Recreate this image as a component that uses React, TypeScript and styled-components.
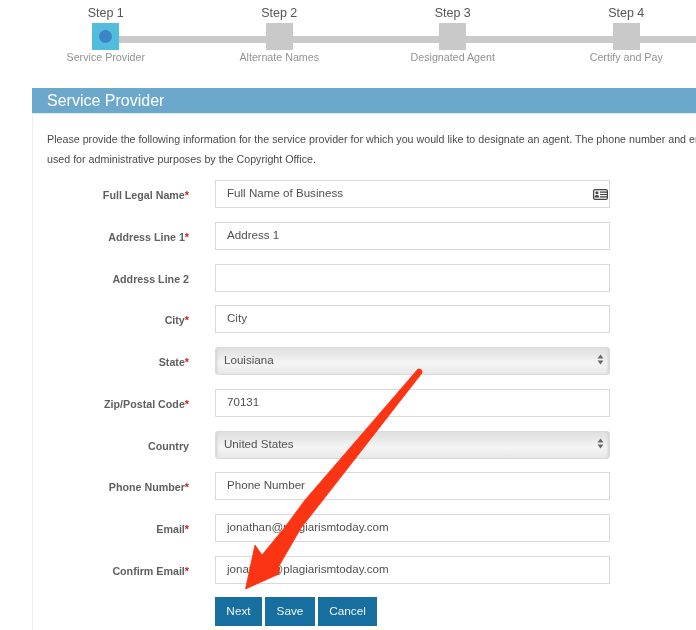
import React from "react";
import styled, { createGlobalStyle } from "styled-components";

const Global = createGlobalStyle`
  html, body { margin: 0; padding: 0; background: #fff; }
  body { font-family: "Liberation Sans", Arial, sans-serif; color: #555; }
`;

const Page = styled.div`
  position: relative;
  width: 696px;
  height: 630px;
  overflow: hidden;
  background: #fff;
  filter: blur(0.35px);
`;

const Stepper = styled.div`
  display: flex;
  padding: 6px 0 0 19px;
  width: 900px;
`;

const Step = styled.div`
  width: 173.5px;
  flex: none;
  display: flex;
  flex-direction: column;
  align-items: center;
  position: relative;
`;

const StepTitle = styled.div`
  font-size: 12.5px;
  line-height: 15px;
  color: #555;
  margin-bottom: 2px;
`;

const Marker = styled.div<{ $active?: boolean }>`
  width: 27px;
  height: 27px;
  background: ${(p) => (p.$active ? "#52bcdc" : "#c9c9c9")};
  display: flex;
  align-items: center;
  justify-content: center;
  position: relative;
  &::after {
    content: "";
    position: absolute;
    left: 27px;
    top: 13px;
    width: 147px;
    height: 7px;
    background: #cacaca;
  }
`;

const Dot = styled.span`
  width: 13px;
  height: 13px;
  border-radius: 50%;
  background: #3d85c6;
`;

const StepCaption = styled.div`
  font-size: 10.7px;
  line-height: 14px;
  color: #929292;
  white-space: nowrap;
`;

const Panel = styled.section`
  margin: 24px 0 0 32px;
  width: 900px;
  border-left: 1px solid #eee;
  height: 600px;
`;

const PanelHeader = styled.h2`
  margin: 0 0 0 -1px;
  height: 25px;
  background: #6ba8cc;
  color: #fff;
  font-size: 16px;
  font-weight: 400;
  line-height: 25px;
  padding-left: 15px;
  border-bottom: 1px solid #dfeaf1;
`;

const Intro = styled.div`
  padding: 15px 0 0 14px;
  font-size: 10.7px;
  line-height: 20px;
  color: #4a4a4a;
  white-space: nowrap;
`;

const Form = styled.form`
  display: flex;
  flex-direction: column;
  gap: 13.75px;
  margin-top: 11px;
`;

const Row = styled.div`
  display: flex;
  align-items: flex-start;
  gap: 26px;
`;

const Label = styled.label`
  width: 156px;
  flex: none;
  text-align: right;
  font-size: 10.7px;
  font-weight: 700;
  color: #5f5f5f;
  line-height: 14px;
  padding-top: 8px;
  white-space: nowrap;
`;

const Star = styled.span`
  color: #c81e1e;
`;

const FieldBox = styled.div`
  width: 395px;
  height: 28px;
  box-sizing: border-box;
  border: 1px solid #d9d9d9;
  background: #fff;
  padding: 0 1px 0 11px;
  display: flex;
  align-items: center;
  justify-content: space-between;
  font-size: 11.6px;
  line-height: 22px;
  color: #505050;
`;

const FieldText = styled.span`
  margin-top: -2.5px;
`;

const SelectBox = styled.div`
  width: 395px;
  height: 28px;
  box-sizing: border-box;
  border: 1px solid #dadada;
  border-radius: 3px;
  background: linear-gradient(#dfdfdf, #f5f5f5 60%, #e8e8e8);
  box-shadow: inset 3px 0 3px -2px #d0d0d0, inset -3px 0 3px -2px #d0d0d0;
  padding: 0 5px 3px 8px;
  display: flex;
  align-items: center;
  justify-content: space-between;
  font-size: 11.6px;
  color: #505050;
`;

const Buttons = styled.div`
  display: flex;
  gap: 3px;
  margin: -1px 0 0 182px;
`;

const Button = styled.button<{ $w: number }>`
  width: ${(p) => p.$w}px;
  height: 29px;
  border: 0;
  padding: 0;
  background: #176f9f;
  color: #f2f7fa;
  font-family: inherit;
  font-size: 11.8px;
`;

const ArrowLayer = styled.svg`
  position: absolute;
  left: 0;
  top: 0;
  pointer-events: none;
`;

const CardIcon = () => (
  <svg width="15" height="11" viewBox="0 0 15 11">
    <rect x="0.6" y="0.6" width="13.8" height="9.8" rx="1.5" fill="#f4f4f4" stroke="#444" strokeWidth="1.2" />
    <circle cx="3.9" cy="3.7" r="1.5" fill="#444" />
    <path d="M1.6 8.6c0-1.8 1-2.6 2.3-2.6s2.3.8 2.3 2.6z" fill="#444" />
    <path d="M7 3.2h7M7 5.5h7M7 7.8h7" stroke="#444" strokeWidth="1.2" />
  </svg>
);

const UpDown = () => (
  <svg width="7" height="11" viewBox="0 0 7 11">
    <path d="M3.5 0.5 6.5 4.5H0.5z M3.5 10.5 0.5 6.5H6.5z" fill="#666" />
  </svg>
);

const steps = [
  ["Step 1", "Service Provider"],
  ["Step 2", "Alternate Names"],
  ["Step 3", "Designated Agent"],
  ["Step 4", "Certify and Pay"],
];

type F = { label: string; req?: boolean; value?: string; select?: boolean; icon?: boolean };
const fields: F[] = [
  { label: "Full Legal Name", req: true, value: "Full Name of Business", icon: true },
  { label: "Address Line 1", req: true, value: "Address 1" },
  { label: "Address Line 2", value: "" },
  { label: "City", req: true, value: "City" },
  { label: "State", req: true, value: "Louisiana", select: true },
  { label: "Zip/Postal Code", req: true, value: "70131" },
  { label: "Country", value: "United States", select: true },
  { label: "Phone Number", req: true, value: "Phone Number" },
  { label: "Email", req: true, value: "jonathan@plagiarismtoday.com" },
  { label: "Confirm Email", req: true, value: "jonathan@plagiarismtoday.com" },
];

export default function App() {
  return (
    <Page>
      <Global />
      <Stepper>
        {steps.map(([t, c], i) => (
          <Step key={t}>
            <StepTitle>{t}</StepTitle>
            <Marker $active={i === 0}>{i === 0 && <Dot />}</Marker>
            <StepCaption>{c}</StepCaption>
          </Step>
        ))}
      </Stepper>
      <Panel>
        <PanelHeader>Service Provider</PanelHeader>
        <Intro>
          Please provide the following information for the service provider for which you would like to designate an agent. The phone number and email address you provide will be
          <br />
          used for administrative purposes by the Copyright Office.
        </Intro>
        <Form>
          {fields.map((f) => (
            <Row key={f.label}>
              <Label>
                {f.label}
                {f.req && <Star>*</Star>}
              </Label>
              {f.select ? (
                <SelectBox>
                  <span>{f.value}</span>
                  <UpDown />
                </SelectBox>
              ) : (
                <FieldBox>
                  <FieldText>{f.value}</FieldText>
                  {f.icon && <CardIcon />}
                </FieldBox>
              )}
            </Row>
          ))}
          <Buttons>
            <Button type="button" $w={47}>Next</Button>
            <Button type="button" $w={50}>Save</Button>
            <Button type="button" $w={59}>Cancel</Button>
          </Buttons>
        </Form>
      </Panel>
      <ArrowLayer width="696" height="630" viewBox="0 0 696 630">
        <path
          d="M418 369 Q422.5 368.5 422 373 L323 500 L301 528 L279 566 L279 574 L245.5 589 L255 545 L262 555 L285 527 L305 500 Z"
          fill="#fb3413"
          stroke="#fb3413"
          strokeWidth="0.8"
          strokeLinejoin="round"
        />
      </ArrowLayer>
    </Page>
  );
}
